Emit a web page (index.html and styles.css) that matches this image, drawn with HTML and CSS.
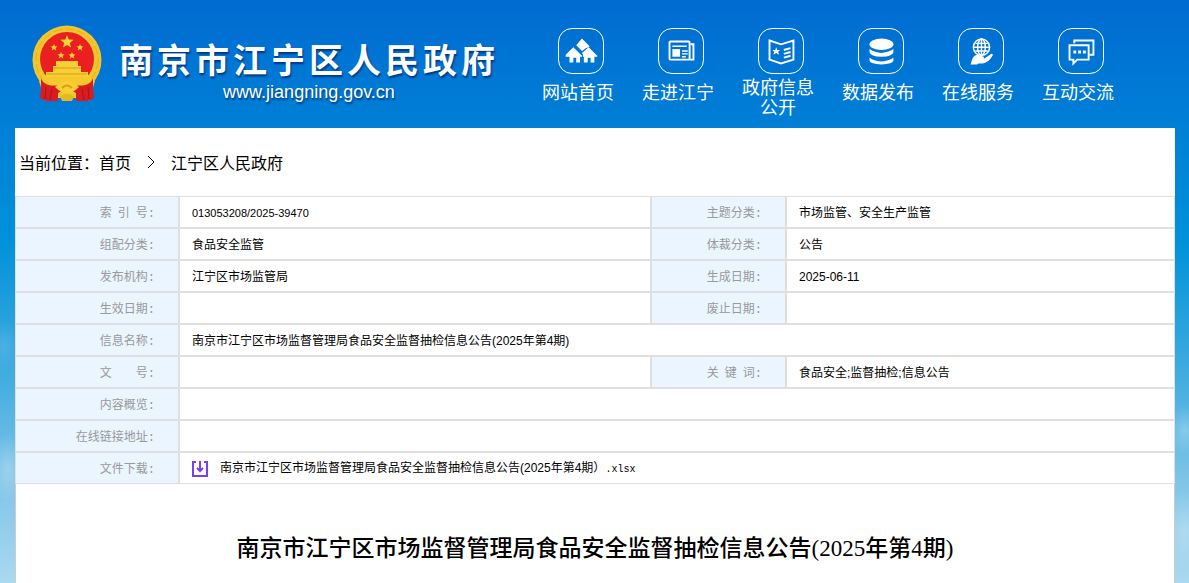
FILE: index.html
```html
<!DOCTYPE html>
<html lang="zh-CN">
<head>
  <meta charset="UTF-8">
  <meta name="viewport" content="width=device-width, initial-scale=1.0">
  <title>南京市江宁区人民政府</title>
  <link rel="stylesheet" href="styles.css">
</head>
<body>
  <header class="header">
    <a class="logo" href="#">
      <svg class="emblem" viewBox="0 0 70 78" aria-hidden="true">
        <circle cx="35" cy="35" r="34.500" fill="#f2c52c"/>
        <circle cx="35" cy="35" r="31" fill="none" stroke="#e3b024" stroke-width="1" stroke-dasharray="9 3"/>
        <circle cx="35" cy="34" r="27" fill="#e9201f"/>
        <path d="M12 50h46l5 6-6 20-12-3H25l-12 3L7 56z" fill="#f4c92d"/>
        <path d="M24 41v-5h22v5h3v6h7v5H14v-5h7v-6z" fill="#f6cf35"/>
        <path d="M21 43h28M15 49h40" stroke="#d99d18" fill="none"/>
        <path d="M9 53c2 6 8 9 18 7l4 5-5 3v8H14l-6-3 1-8zM61 53c-2 6-8 9-18 7l-4 5 5 3v8h12l6-3-1-8z" fill="#d81c20"/>
        <path d="M14 62l-1 12M20 64l-2 11M56 62l1 12M50 64l2 11" stroke="#a9141b" fill="none"/>
        <path d="M23 62q12-12 24 0-12 12-24 0z" fill="#f6cf35"/>
        <path d="M30 63q5-5 10 0" fill="none" stroke="#d99d18" stroke-width="2"/>
        <path d="M28 71q7-4 14 0l-2 5H30z" fill="#e8b523"/>
        <g fill="#f8d731">
          <path d="M35 10l1.700 4.600 4.900.2-3.800 3.100 1.300 4.700-4.100-2.700-4.100 2.700 1.300-4.700-3.800-3.100 4.900-.2z"/>
          <path d="M22 19l1 2.200 2.500.2-2 1.600.7 2.400-2.200-1.300-2.200 1.300.7-2.400-2-1.600 2.500-.2z"/>
          <path d="M48 19l1 2.200 2.500.2-2 1.600.7 2.400-2.200-1.300-2.200 1.300.7-2.400-2-1.600 2.500-.2z"/>
          <path d="M29 27l1 2.200 2.500.2-2 1.600.7 2.400-2.200-1.300-2.200 1.300.7-2.400-2-1.600 2.500-.2z"/>
          <path d="M40 27l1 2.200 2.500.2-2 1.600.7 2.400-2.200-1.300-2.200 1.300.7-2.400-2-1.600 2.500-.2z"/>
        </g>
      </svg>
      <span class="logo-text">
        <span class="site-name">南京市江宁区人民政府</span>
        <span class="site-url">www.jiangning.gov.cn</span>
      </span>
    </a>
    <nav class="nav">
      <a href="#">
        <span class="nav-icon">
          <svg viewBox="0 0 46 46" fill="#fff">
            <path d="M24 10l8 8-1 1-3 1-4 3-6-6z"/>
            <path d="M15 19l9 9v1h-2v6h-4v-5h-3v5h-4v-6H7v-2z"/>
            <path d="M31 19l9 9v1h-3v6h-4v-5h-3v5h-4v-6h-1v-2l-1-2z"/>
          </svg>
        </span>
        <span class="nav-label">网站首页</span>
      </a>
      <a href="#">
        <span class="nav-icon">
          <svg viewBox="0 0 46 46" fill="none" stroke="#fff" stroke-width="2">
            <rect x="11" y="13" width="21" height="19" rx="1"/>
            <path d="M33 16h3v16h-4"/>
            <path d="M14 18h15M24 23h6M24 26h6M24 29h4" stroke-width="1.500"/>
            <path d="M14 21h8v8h-8z" fill="#fff" stroke="none"/>
          </svg>
        </span>
        <span class="nav-label">走进江宁</span>
      </a>
      <a href="#">
        <span class="nav-icon">
          <svg viewBox="0 0 46 46" fill="none" stroke="#fff" stroke-width="2">
            <path d="M11 12l12 4 13-4v20l-13 4-12-4z"/>
            <path d="M26 22l7-2M26 26l7-2M26 30l7-2"/>
            <path d="M18 19l1 3h3l-2 2 1 3-3-2-3 2 1-3-2-2h3z" fill="#fff" stroke="none"/>
          </svg>
        </span>
        <span class="nav-label two-line">政府信息公开</span>
      </a>
      <a href="#">
        <span class="nav-icon">
          <svg viewBox="0 0 46 46" fill="#fff">
            <ellipse cx="23.500" cy="16" rx="12.500" ry="6"/>
            <path d="M11 21q12 8 25 0v3q-1 5-12.500 5T11 24z"/>
            <path d="M11 30q12 8 25 0v3q-1 4-12.500 4T11 33z"/>
          </svg>
        </span>
        <span class="nav-label">数据发布</span>
      </a>
      <a href="#">
        <span class="nav-icon">
          <svg viewBox="0 0 46 46" fill="none" stroke="#fff" stroke-width="1.500">
            <circle cx="23.500" cy="19" r="8.500"/>
            <ellipse cx="23.500" cy="19" rx="4" ry="8.500"/>
            <path d="M23.500 11v17M15 19h17M17 15h13M17 23h13"/>
            <path d="M12 37l2-6q2-4 6-4l6 2v2h-5 5l8-5q2 0 1 2-4 7-10 8h-5l-1 1z" fill="#fff" stroke="none"/>
          </svg>
        </span>
        <span class="nav-label">在线服务</span>
      </a>
      <a href="#">
        <span class="nav-icon">
          <svg viewBox="0 0 46 46" fill="none" stroke="#fff" stroke-width="2">
            <path d="M16 15v-3h20v15h-4"/>
            <path d="M11 17h20v15H19l-4 4v-4h-4z"/>
            <path d="M15 24h3M20 24h3M25 24h3" stroke-width="3"/>
          </svg>
        </span>
        <span class="nav-label">互动交流</span>
      </a>
    </nav>
  </header>

  <main class="content">
    <div class="breadcrumb">
      <span>当前位置：</span>
      <a href="#">首页</a>
      <svg class="arrow" viewBox="0 0 8 12" fill="none" stroke="#000"><path d="M1 0l6 6-6 6"/></svg>
      <a href="#">江宁区人民政府</a>
    </div>

    <table class="info">
      <colgroup>
        <col class="col-label">
        <col class="col-wide">
        <col class="col-label2">
        <col>
      </colgroup>
      <tr>
        <th>索&ensp;引&ensp;号:</th>
        <td class="index-no">013053208/2025-39470</td>
        <th>主题分类:</th>
        <td>市场监管、安全生产监管</td>
      </tr>
      <tr>
        <th>组配分类:</th>
        <td>食品安全监管</td>
        <th>体裁分类:</th>
        <td>公告</td>
      </tr>
      <tr>
        <th>发布机构:</th>
        <td>江宁区市场监管局</td>
        <th>生成日期:</th>
        <td>2025-06-11</td>
      </tr>
      <tr>
        <th>生效日期:</th>
        <td></td>
        <th>废止日期:</th>
        <td></td>
      </tr>
      <tr>
        <th>信息名称:</th>
        <td colspan="3">南京市江宁区市场监督管理局食品安全监督抽检信息公告(2025年第4期)</td>
      </tr>
      <tr>
        <th>文&emsp;&emsp;号:</th>
        <td></td>
        <th>关&ensp;键&ensp;词:</th>
        <td>食品安全;监督抽检;信息公告</td>
      </tr>
      <tr>
        <th>内容概览:</th>
        <td colspan="3"></td>
      </tr>
      <tr>
        <th>在线链接地址:</th>
        <td colspan="3"></td>
      </tr>
      <tr>
        <th>文件下载:</th>
        <td colspan="3">
          <a class="download" href="#">
            <svg viewBox="0 0 16 16" fill="none" stroke="#7b3ff2" stroke-width="2">
              <path d="M4 1H1v14h14V1h-3"/>
              <path d="M8 0v10M5 7l3 3 3-3"/>
            </svg>
            <span>南京市江宁区市场监督管理局食品安全监督抽检信息公告(2025年第4期）<span class="ext">.xlsx</span></span>
          </a>
        </td>
      </tr>
    </table>

    <h1 class="title">南京市江宁区市场监督管理局食品安全监督抽检信息公告(2025年第4期)</h1>
  </main>
</body>
</html>
```

FILE: styles.css
```css
* {
  box-sizing: border-box;
}
body {
  margin: 0;
  min-height: 100vh;
  display: flex;
  flex-direction: column;
  padding: 0 14px 0 15px;
  font-family: "Liberation Sans", "Noto Sans CJK SC", sans-serif;
  color: #000;
  background:
    radial-gradient(ellipse 16px 26px at 4px 345px, rgba(255,255,255,0.12), transparent),
    radial-gradient(ellipse 18px 34px at 8px 468px, rgba(255,255,255,0.25), transparent),
    radial-gradient(ellipse 16px 24px at right 4px top 430px, rgba(255,255,255,0.25), transparent),
    radial-gradient(ellipse 20px 40px at right 4px top 530px, rgba(255,255,255,0.25), transparent),
    linear-gradient(#006bd2 0, #0080d6 128px, #0091da 240px, #44addf 380px, #7fc4e7 480px, #aad9f0 583px);
}
a {
  color: inherit;
  text-decoration: none;
}
.header {
  height: 128px;
  display: flex;
  align-items: flex-start;
}
.logo {
  display: flex;
  gap: 17px;
  padding: 25px 0 0 17px;
  color: #fff;
}
.emblem {
  width: 70px;
  height: 78px;
}
.logo-text {
  display: flex;
  flex-direction: column;
  align-items: center;
  padding-top: 16px;
  text-shadow: 1px 2px 2px rgba(0,30,90,0.7);
}
.site-name {
  font-size: 34px;
  line-height: 40px;
  font-weight: bold;
  letter-spacing: 4px;
}
.site-url {
  font-size: 18px;
  line-height: 22px;
}
.nav {
  display: flex;
  gap: 20px;
  margin-left: auto;
  padding: 28px 57px 0 0;
}
.nav a {
  width: 80px;
  display: flex;
  flex-direction: column;
  align-items: center;
  gap: 4px;
  color: #fff;
}
.nav-icon {
  width: 46px;
  height: 46px;
  margin-left: 6px;
  border: 1px solid #fff;
  border-radius: 14px;
}
.nav-icon svg {
  display: block;
  width: 44px;
  height: 44px;
}
.nav-label {
  font-size: 18px;
  line-height: 30px;
  text-align: center;
}
.nav-label.two-line {
  line-height: 20px;
}
.content {
  flex: 1;
  display: flex;
  flex-direction: column;
  background: #fff;
}
.breadcrumb {
  height: 68px;
  display: flex;
  align-items: center;
  padding-left: 4px;
  font-size: 16px;
}
.arrow {
  width: 8px;
  height: 12px;
  margin: 0 16px;
}
.info {
  width: 100%;
  table-layout: fixed;
  border-spacing: 0;
  border-collapse: separate;
  font-size: 12px;
}
.col-label {
  width: 164px;
}
.col-wide {
  width: 472px;
}
.col-label2 {
  width: 135px;
}
.info th,
.info td {
  height: 32px;
  padding: 2px 12px 0;
  border: 1px solid #dfdfdf;
  line-height: 18px;
}
.info th {
  padding-top: 4px;
  padding-right: 23px;
  background: #eaf5ff;
  color: #999;
  font-family: "Liberation Mono", "Noto Sans CJK SC", monospace;
  font-weight: normal;
  text-align: right;
}
.info .index-no {
  font-size: 11px;
}
.download {
  display: flex;
  align-items: center;
  gap: 12px;
}
.download svg {
  width: 16px;
  height: 16px;
}
.ext {
  font-family: "Liberation Mono", monospace;
  font-size: 10px;
}
.title {
  flex: 1;
  margin: 0;
  padding: 48px 0 16px;
  border: solid #ccc;
  border-width: 0 1px;
  font-family: "Liberation Serif", "Noto Sans CJK SC", serif;
  font-size: 23px;
  line-height: 34px;
  font-weight: 500;
  text-align: center;
}
```
